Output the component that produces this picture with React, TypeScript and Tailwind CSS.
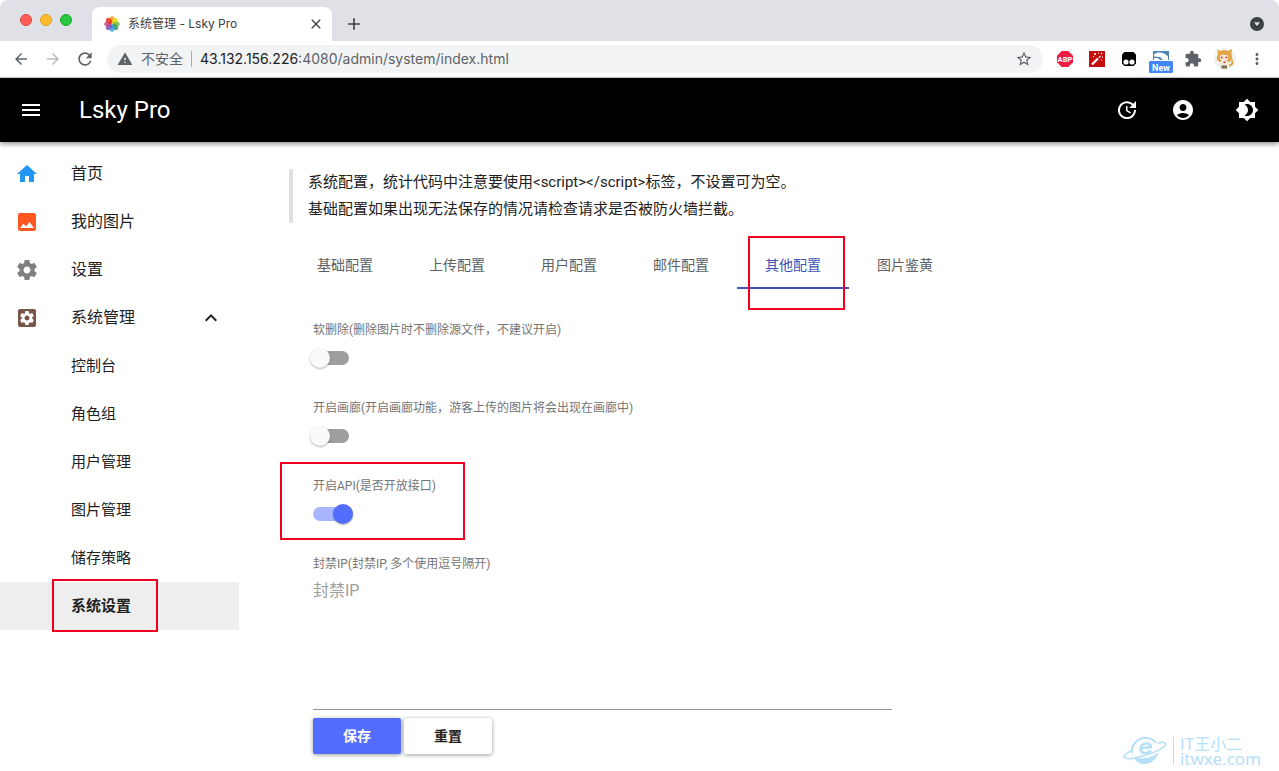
import React, { useState } from 'react';
import {
  MdAccountCircle,
  MdArrowBack,
  MdArrowForward,
  MdBrightness4,
  MdClose,
  MdExpandLess,
  MdExtension,
  MdImage,
  MdMenu,
  MdMoreVert,
  MdAdd,
  MdRefresh,
  MdStarBorder,
  MdUpdate,
  MdWarning,
} from 'react-icons/md';

const GEAR =
  'M19.43 12.98c.04-.32.07-.64.07-.98s-.03-.66-.07-.98l2.11-1.65c.19-.15.24-.42.12-.64l-2-3.46c-.12-.22-.39-.3-.61-.22l-2.49 1c-.52-.4-1.08-.73-1.69-.98l-.38-2.65C14.46 2.18 14.25 2 14 2h-4c-.25 0-.46.18-.49.42l-.38 2.65c-.61.25-1.17.59-1.69.98l-2.49-1c-.23-.09-.49 0-.61.22l-2 3.46c-.13.22-.07.49.12.64l2.11 1.65c-.04.32-.07.65-.07.98s.03.66.07.98l-2.11 1.65c-.19.15-.24.42-.12.64l2 3.46c.12.22.39.3.61.22l2.49-1c.52.4 1.08.73 1.69.98l.38 2.65c.03.24.24.42.49.42h4c.25 0 .46-.18.49-.42l.38-2.65c.61-.25 1.17-.59 1.69-.98l2.49 1c.23.09.49 0 .61-.22l2-3.46c.12-.22.07-.49-.12-.64l-2.11-1.65zM12 15.5c-1.93 0-3.5-1.57-3.5-3.5s1.57-3.5 3.5-3.5 3.5 1.57 3.5 3.5-1.57 3.5-3.5 3.5z';

const petals = ['#f79a13', '#f5dc1a', '#7fbf35', '#2b9c5a', '#3f9fe6', '#7d52c0', '#c2478f', '#ee3226'];

const HomeIcon = () => (
  <svg viewBox="0 0 24 24" className="w-6 h-6 text-[#2196f3]" fill="currentColor">
    <path d="M10 20v-6h4v6h5v-8h3L12 3 2 12h3v8z" />
  </svg>
);

const GearIcon = () => (
  <svg viewBox="0 0 24 24" className="w-6 h-6 text-[#808080]" fill="currentColor">
    <path d={GEAR} />
  </svg>
);

const GearBoxIcon = () => (
  <svg viewBox="0 0 24 24" className="w-6 h-6">
    <rect x="3" y="3" width="18" height="18" rx="2" fill="#795548" />
    <path d={GEAR} fill="#fff" transform="translate(3.6 3.6) scale(.7)" />
  </svg>
);

const menu = [
  { label: '首页', icon: <HomeIcon /> },
  { label: '我的图片', icon: <MdImage className="w-6 h-6 text-[#ff5722]" /> },
  { label: '设置', icon: <GearIcon /> },
];

const subMenu = ['控制台', '角色组', '用户管理', '图片管理', '储存策略', '系统设置'];

const tabs = ['基础配置', '上传配置', '用户配置', '邮件配置', '其他配置', '图片鉴黄'];

const BrowserBar = () => (
  <div className="bg-white text-[#5f6368] font-['Inter','Noto_Sans_CJK_SC',sans-serif]">
    {/* Tab strip */}
    <div className="h-[41px] bg-[#dfe1e6] flex items-end rounded-t-lg">
      <div className="w-[92px] h-full flex gap-2 pl-5 pt-[14px]">
        <span className="w-3 h-3 rounded-full bg-[#ff5f57] border border-[#e0443e]" />
        <span className="w-3 h-3 rounded-full bg-[#febc2e] border border-[#dea123]" />
        <span className="w-3 h-3 rounded-full bg-[#28c840] border border-[#1aab29]" />
      </div>
      <div className="w-60 h-[34px] bg-white rounded-t-lg flex items-center pl-3 pr-2">
        <svg viewBox="0 0 16 16" className="w-4 h-4">
          {petals.map((color, i) => (
            <ellipse key={color} cx="8" cy="3.8" rx="2.6" ry="3.6" fill={color} fillOpacity=".85" transform={`rotate(${i * 45} 8 8)`} />
          ))}
        </svg>
        <span className="ml-2 flex-1 text-xs text-[#3c4043]">系统管理 - Lsky Pro</span>
        <button aria-label="关闭" className="text-[#3c4043]">
          <MdClose className="w-4 h-4" />
        </button>
      </div>
      <button aria-label="新标签页" className="ml-3 mb-[7px] text-[#3c4043]">
        <MdAdd className="w-5 h-5" />
      </button>
      <button aria-label="标签列表" className="ml-auto mr-[15px] mb-[10px]">
        <svg viewBox="0 0 14 14" className="w-[14px] h-[14px]">
          <circle cx="7" cy="7" r="7" fill="#3c4043" />
          <path d="M4 5.3h6L7 9z" fill="#dfe1e6" />
        </svg>
      </button>
    </div>

    {/* Address bar */}
    <div className="h-[37px] border-b border-[#d5d6d9] flex items-center pl-3">
      <button aria-label="后退"><MdArrowBack className="w-[18px] h-[18px]" /></button>
      <button aria-label="前进" className="ml-[14px] text-[#babcbe]"><MdArrowForward className="w-[18px] h-[18px]" /></button>
      <button aria-label="刷新" className="ml-[13px]"><MdRefresh className="w-5 h-5" /></button>
      <div className="ml-3 flex-1 h-7 rounded-full bg-[#f1f3f4] flex items-center px-[10px] text-sm">
        <MdWarning className="w-4 h-4" />
        <span className="ml-2">不安全</span>
        <span className="mx-2 w-px h-4 bg-[#a9abae]" />
        <span className="flex-1"><span className="text-[#202124]">43.132.156.226</span>:4080/admin/system/index.html</span>
        <button aria-label="收藏"><MdStarBorder className="w-[18px] h-[18px]" /></button>
      </div>
      <div className="ml-[14px] mr-[14px] flex items-center gap-4">
        <svg viewBox="0 0 16 16" className="w-4 h-4">
          <path d="M4.7 0h6.6L16 4.7v6.6L11.3 16H4.7L0 11.3V4.7z" fill="#ed1c40" />
          <text x="8" y="10.7" textAnchor="middle" fontSize="7.6" fontWeight="700" fill="#fff" className="font-['Roboto']">ABP</text>
        </svg>
        <svg viewBox="0 0 16 16" className="w-4 h-4">
          <path d="M0 0h16v16H0z" fill="#c40d0d" />
          <path d="M3 13.5l6-6" stroke="#fff" strokeWidth="2.2" />
          <path d="M9.8 6.8l1.8-1.8M6 2v2M5 3h2M9 2h1M12 2l1 1M13 6h1M12 9h1M4 5.5h1" stroke="#fff" strokeWidth="1.1" />
        </svg>
        <svg viewBox="0 0 16 16" className="w-4 h-4">
          <path d="M3.500 1h9L15 3.500v9L12.500 15h-9L1 12.500v-9z" fill="#000" />
          <circle cx="5" cy="11" r="2.600" fill="#fff" />
          <circle cx="11" cy="11" r="2.600" fill="#fff" />
        </svg>
        <svg viewBox="0 0 24 30" className="w-6 h-[30px] -mx-1">
          <path d="M4 7h16v9H4z" fill="#4a86b8" />
          <path d="M5 10.500C9 7.500 15 8 19 12.500V16H14L11 13 5 12.500z" fill="#fff" />
          <path d="M5 14h4l2 2H5z" fill="#fff" />
          <rect y="17" width="24" height="12" rx="1.500" fill="#4285f4" />
          <text x="12" y="26.500" textAnchor="middle" fontSize="9" fontWeight="700" fill="#fff" className="font-['Roboto']">New</text>
        </svg>
        <MdExtension className="w-[18px] h-[18px] -mx-px" />
        <svg viewBox="0 0 22 22" className="w-[22px] h-[22px] -mx-[3px]">
          <circle cx="11" cy="11" r="11" fill="#edf4ef" />
          <path d="M3 1l3 2c3-1.500 6-1.500 8 0l4-2-.500 5 1 5-3 3H5l-2.500-3.500L4 6z" fill="#e2a646" />
          <path d="M6 7.500l3-1 5 1v3.500l-2 2H8l-2-2z" fill="#fbe6d8" />
          <path d="M7 9.500h1.600M11.500 9.500h1.600" stroke="#a8322c" strokeWidth="1.600" />
          <path d="M6.500 13h7l2.500 4-3 2.500H8L5 17z" fill="#f3e9dc" />
          <path d="M9.500 13.500h2v1.600h-2z" fill="#c0392b" />
          <path d="M15 17.500c3.500 0 4-3 3-5" stroke="#e2a646" strokeWidth="2" fill="none" />
          <path d="M7.500 17.500h5.500v3H7.500z" fill="#7d6a48" />
        </svg>
        <button aria-label="更多" className="-mx-px"><MdMoreVert className="w-[18px] h-[18px]" /></button>
      </div>
    </div>
  </div>
);

const Switch = ({ id, label, defaultChecked = false, marked = false }: { id: string; label: string; defaultChecked?: boolean; marked?: boolean }) => (
  <div className="relative mb-[30px]">
    <label htmlFor={id} className="block text-xs leading-4 text-[#757575]">{label}</label>
    <div className="mt-2 h-6 flex items-center">
      <input
        id={id}
        type="checkbox"
        role="switch"
        defaultChecked={defaultChecked}
        className="appearance-none relative w-9 h-[14px] rounded-full bg-[#9e9e9e] checked:bg-[#a8b6ff] before:absolute before:-top-[3px] before:-left-[3px] before:w-5 before:h-5 before:rounded-full before:bg-[#fafafa] before:shadow-[0_1px_2px_rgba(0,0,0,0.3)] checked:before:left-5 checked:before:bg-[#536dfe]"
      />
    </div>
    {marked && <span className="absolute -left-[33px] -top-4 w-[185px] h-[78px] border-2 border-[#f00020] pointer-events-none" />}
  </div>
);

const App = () => {
  const [active, setActive] = useState('其他配置');

  return (
    <div className="relative min-h-screen flex flex-col bg-white text-[#212121] font-['Roboto','Noto_Sans_CJK_SC',sans-serif]">
      <BrowserBar />

      {/* Header */}
      <header className="relative z-10 h-16 bg-black text-white flex items-center pl-[19px] pr-5 shadow-[0_2px_5px_rgba(0,0,0,0.45)]">
        <button aria-label="菜单"><MdMenu className="w-6 h-6" /></button>
        <a href="#" className="ml-9 text-2xl">Lsky Pro</a>
        <div className="ml-auto flex items-center">
          <button aria-label="更新"><MdUpdate className="w-6 h-6" /></button>
          <button aria-label="账号" className="ml-8"><MdAccountCircle className="w-6 h-6" /></button>
          <button aria-label="夜间模式" className="ml-10"><MdBrightness4 className="w-6 h-6" /></button>
        </div>
      </header>

      <div className="flex-1 flex">
        {/* Sidebar */}
        <nav className="w-[239px] shrink-0 pt-2">
          {menu.map((item) => (
            <a key={item.label} href="#" className="h-12 flex items-center pl-[15px]">
              {item.icon}
              <span className="ml-8">{item.label}</span>
            </a>
          ))}
          <button className="w-full h-12 flex items-center pl-[15px] pr-4">
            <GearBoxIcon />
            <span className="ml-8">系统管理</span>
            <MdExpandLess className="ml-auto w-6 h-6" />
          </button>
          {subMenu.map((label) => (
            <a
              key={label}
              href="#"
              className={`relative h-12 flex items-center pl-[71px] text-[15px] ${label === '系统设置' ? 'bg-[#eeeeee] font-bold' : ''}`}
            >
              {label}
              {label === '系统设置' && (
                <span className="absolute left-[52px] -top-[3px] w-[106px] h-[53px] border-2 border-[#f00020] pointer-events-none" />
              )}
            </a>
          ))}
        </nav>

        <main className="flex-1 pl-[50px] pr-12 pt-[27px]">
          <blockquote className="border-l-4 border-[#e0e0e0] pl-[15px] text-[15px] leading-[27px]">
            <p>系统配置，统计代码中注意要使用&lt;script&gt;&lt;/script&gt;标签，不设置可为空。</p>
            <p>基础配置如果出现无法保存的情况请检查请求是否被防火墙拦截。</p>
          </blockquote>

          {/* Tabs */}
          <div role="tablist" className="mt-[18px] flex">
            {tabs.map((tab) => (
              <button
                key={tab}
                role="tab"
                aria-selected={tab === active}
                onClick={() => setActive(tab)}
                className={`relative w-28 h-12 text-sm ${tab === active ? 'shadow-[inset_0_-2px_0_#3f51b5] text-[#3f51b5]' : 'text-[#616161]'}`}
              >
                {tab}
                {tab === '其他配置' && (
                  <span className="absolute left-[11px] -top-[5px] w-[97px] h-[74px] border-2 border-[#f00020] pointer-events-none" />
                )}
              </button>
            ))}
          </div>

          <form className="pl-6 pt-[33px]" onSubmit={(e) => e.preventDefault()}>
            <Switch id="soft-delete" label="软删除(删除图片时不删除源文件，不建议开启)" />
            <Switch id="gallery" label="开启画廊(开启画廊功能，游客上传的图片将会出现在画廊中)" />
            <Switch id="api" label="开启API(是否开放接口)" defaultChecked marked />
            <div className="max-w-[579px]">
              <label htmlFor="ban-ip" className="block text-xs leading-4 text-[#757575]">封禁IP(封禁IP, 多个使用逗号隔开)</label>
              <textarea
                id="ban-ip"
                placeholder="封禁IP"
                className="block w-full h-[138px] pt-2 leading-[22px] resize-none outline-none border-b border-[#949494] placeholder:text-[#9e9e9e]"
              />
            </div>
            <div className="mt-2 flex gap-[3px] text-sm font-bold">
              <button type="submit" className="w-[88px] h-9 rounded-xs bg-[#536dfe] text-white shadow-[0_1px_4px_rgba(0,0,0,0.4)]">保存</button>
              <button type="reset" className="w-[88px] h-9 rounded-xs bg-white shadow-[0_1px_4px_rgba(0,0,0,0.4)]">重置</button>
            </div>
          </form>
        </main>
      </div>

      {/* Watermark */}
      <div className="absolute right-[18px] bottom-[5px] flex items-center text-[#b5e0f7] pointer-events-none">
        <svg viewBox="0 0 44 30" className="w-11 h-[30px]" fill="none" stroke="currentColor">
          <path d="M33 7A13.500 13.500 0 0 0 9 17" strokeWidth="2.200" />
          <path d="M11 22C17 31 31 29 35 17C28 23 19 24 11 22z" fill="currentColor" strokeWidth="1" />
          <path d="M18 12.500L28 11C27.500 5 18 7 17.500 13C17.500 18 24 18.500 28 14.500" strokeWidth="2.600" />
          <path d="M10 14C-3 20-2 25 14 21.500C31 18 48 9 41 6.500C39 6 37 6.500 35 7" strokeWidth="1.600" />
        </svg>
        <span className="ml-[6px] w-px h-7 bg-current" />
        <div className="ml-[6px] leading-[15px]">
          <p className="text-base leading-[15px] font-['Noto_Sans_CJK_SC',sans-serif]">IT王小二</p>
          <p className="text-[17px] leading-[15px] font-['Noto_Sans',sans-serif]">itwxe.com</p>
        </div>
      </div>
    </div>
  );
};

export default App;
